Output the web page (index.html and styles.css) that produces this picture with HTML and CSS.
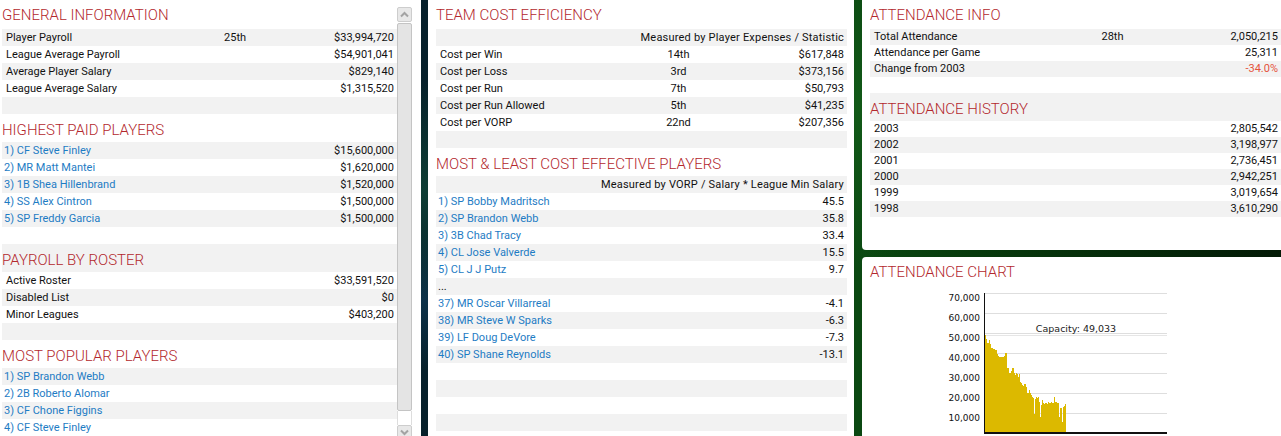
FILE: index.html
```html
<!DOCTYPE html>
<html lang="en">
<head>
<meta charset="utf-8">
<title>Team Finances</title>
<link rel="stylesheet" href="styles.css">
</head>
<body>
<div class="screen">
  <section class="panel panel-left">
    <div class="list list-left">
      <div class="title first">GENERAL INFORMATION</div>
      <div class="row"><span class="c-name">Player Payroll</span><span class="c-rank">25th</span><span class="c-val">$33,994,720</span></div>
      <div class="row"><span class="c-name">League Average Payroll</span><span class="c-rank"></span><span class="c-val">$54,901,041</span></div>
      <div class="row"><span class="c-name">Average Player Salary</span><span class="c-rank"></span><span class="c-val">$829,140</span></div>
      <div class="row"><span class="c-name">League Average Salary</span><span class="c-rank"></span><span class="c-val">$1,315,520</span></div>
      <div class="row empty"></div>
      <div class="title">HIGHEST PAID PLAYERS</div>
      <div class="row link"><span class="c-name">1) CF Steve Finley</span><span class="c-rank"></span><span class="c-val">$15,600,000</span></div>
      <div class="row link"><span class="c-name">2) MR Matt Mantei</span><span class="c-rank"></span><span class="c-val">$1,620,000</span></div>
      <div class="row link"><span class="c-name">3) 1B Shea Hillenbrand</span><span class="c-rank"></span><span class="c-val">$1,520,000</span></div>
      <div class="row link"><span class="c-name">4) SS Alex Cintron</span><span class="c-rank"></span><span class="c-val">$1,500,000</span></div>
      <div class="row link"><span class="c-name">5) SP Freddy Garcia</span><span class="c-rank"></span><span class="c-val">$1,500,000</span></div>
      <div class="row empty"></div>
      <div class="title">PAYROLL BY ROSTER</div>
      <div class="row"><span class="c-name">Active Roster</span><span class="c-rank"></span><span class="c-val">$33,591,520</span></div>
      <div class="row"><span class="c-name">Disabled List</span><span class="c-rank"></span><span class="c-val">$0</span></div>
      <div class="row"><span class="c-name">Minor Leagues</span><span class="c-rank"></span><span class="c-val">$403,200</span></div>
      <div class="row empty"></div>
      <div class="title">MOST POPULAR PLAYERS</div>
      <div class="row link"><span class="c-name">1) SP Brandon Webb</span><span class="c-rank"></span><span class="c-val"></span></div>
      <div class="row link"><span class="c-name">2) 2B Roberto Alomar</span><span class="c-rank"></span><span class="c-val"></span></div>
      <div class="row link"><span class="c-name">3) CF Chone Figgins</span><span class="c-rank"></span><span class="c-val"></span></div>
      <div class="row link"><span class="c-name">4) CF Steve Finley</span><span class="c-rank"></span><span class="c-val"></span></div>
    </div>
    <div class="scrollbar">
      <div class="sb-btn"><svg width="13" height="13" viewBox="0 0 13 13"><path d="M3 8.5 L6.5 5 L10 8.5" fill="none" stroke="#a3a3a3" stroke-width="2"/></svg></div>
      <div class="sb-thumb"></div>
      <div class="sb-track"></div>
      <div class="sb-btn"><svg width="13" height="13" viewBox="0 0 13 13"><path d="M3 4.5 L6.5 8 L10 4.5" fill="none" stroke="#a3a3a3" stroke-width="2"/></svg></div>
    </div>
  </section>

  <section class="panel panel-mid">
    <div class="list">
      <div class="title first">TEAM COST EFFICIENCY</div>
      <div class="row note"><span class="c-val">Measured by Player Expenses / Statistic</span></div>
      <div class="row"><span class="c-name">Cost per Win</span><span class="c-rank">14th</span><span class="c-val">$617,848</span></div>
      <div class="row"><span class="c-name">Cost per Loss</span><span class="c-rank">3rd</span><span class="c-val">$373,156</span></div>
      <div class="row"><span class="c-name">Cost per Run</span><span class="c-rank">7th</span><span class="c-val">$50,793</span></div>
      <div class="row"><span class="c-name">Cost per Run Allowed</span><span class="c-rank">5th</span><span class="c-val">$41,235</span></div>
      <div class="row"><span class="c-name">Cost per VORP</span><span class="c-rank">22nd</span><span class="c-val">$207,356</span></div>
      <div class="row empty"></div>
      <div class="title">MOST &amp; LEAST COST EFFECTIVE PLAYERS</div>
      <div class="row note"><span class="c-val">Measured by VORP / Salary * League Min Salary</span></div>
      <div class="row link"><span class="c-name">1) SP Bobby Madritsch</span><span class="c-rank"></span><span class="c-val">45.5</span></div>
      <div class="row link"><span class="c-name">2) SP Brandon Webb</span><span class="c-rank"></span><span class="c-val">35.8</span></div>
      <div class="row link"><span class="c-name">3) 3B Chad Tracy</span><span class="c-rank"></span><span class="c-val">33.4</span></div>
      <div class="row link"><span class="c-name">4) CL Jose Valverde</span><span class="c-rank"></span><span class="c-val">15.5</span></div>
      <div class="row link"><span class="c-name">5) CL J J Putz</span><span class="c-rank"></span><span class="c-val">9.7</span></div>
      <div class="row plain-left"><span class="c-name">...</span><span class="c-rank"></span><span class="c-val"></span></div>
      <div class="row link"><span class="c-name">37) MR Oscar Villarreal</span><span class="c-rank"></span><span class="c-val">-4.1</span></div>
      <div class="row link"><span class="c-name">38) MR Steve W Sparks</span><span class="c-rank"></span><span class="c-val">-6.3</span></div>
      <div class="row link"><span class="c-name">39) LF Doug DeVore</span><span class="c-rank"></span><span class="c-val">-7.3</span></div>
      <div class="row link"><span class="c-name">40) SP Shane Reynolds</span><span class="c-rank"></span><span class="c-val">-13.1</span></div>
      <div class="row empty"></div>
      <div class="row empty"></div>
      <div class="row empty"></div>
      <div class="row empty"></div>
      <div class="row empty"></div>
    </div>
  </section>

  <div class="right-col">
    <section class="panel panel-right panel-att">
      <div class="list">
        <div class="title first">ATTENDANCE INFO</div>
        <div class="row"><span class="c-name">Total Attendance</span><span class="c-rank">28th</span><span class="c-val">2,050,215</span></div>
        <div class="row"><span class="c-name">Attendance per Game</span><span class="c-rank"></span><span class="c-val">25,311</span></div>
        <div class="row"><span class="c-name">Change from 2003</span><span class="c-rank"></span><span class="c-val neg">-34.0%</span></div>
        <div class="row empty"></div>
        <div class="title">ATTENDANCE HISTORY</div>
        <div class="row"><span class="c-name">2003</span><span class="c-rank"></span><span class="c-val">2,805,542</span></div>
        <div class="row"><span class="c-name">2002</span><span class="c-rank"></span><span class="c-val">3,198,977</span></div>
        <div class="row"><span class="c-name">2001</span><span class="c-rank"></span><span class="c-val">2,736,451</span></div>
        <div class="row"><span class="c-name">2000</span><span class="c-rank"></span><span class="c-val">2,942,251</span></div>
        <div class="row"><span class="c-name">1999</span><span class="c-rank"></span><span class="c-val">3,019,654</span></div>
        <div class="row"><span class="c-name">1998</span><span class="c-rank"></span><span class="c-val">3,610,290</span></div>
      </div>
    </section>
    <section class="panel panel-right panel-chart">
      <div class="title first">ATTENDANCE CHART</div>
      <div class="chart">
        <svg width="250" height="150" viewBox="0 0 250 150">
          <g stroke="#dedede" stroke-width="1">
            <line x1="55" x2="237" y1="7.5" y2="7.5"/>
            <line x1="55" x2="237" y1="27.5" y2="27.5"/>
            <line x1="55" x2="237" y1="47.5" y2="47.5"/>
            <line x1="55" x2="237" y1="67.5" y2="67.5"/>
            <line x1="55" x2="237" y1="87.5" y2="87.5"/>
            <line x1="55" x2="237" y1="107.5" y2="107.5"/>
            <line x1="55" x2="237" y1="127.5" y2="127.5"/>
            <line x1="55" x2="237" y1="49.5" y2="49.5" stroke="#e6e6e6"/>
          </g>
          <path fill="#dcb900" d="M55 146V49H56V53H57V57H59V54H60V58H61V62H63V63H65V64H67V68H68V70H69V71H74V70H75V67H77V82H79V87H81V85H82V82H84V87H85V89H86V87H87V88H88V91H89V88H90V96H91V97H92V99H93V100H94V98H96V101H97V107H99V104H100V107H101V109H102V111H103V112H104V128H105V113H106V111H107V112H108V111H109V116H110V131H111V119H112V114H113V117H114V118H115V117H117V118H118V116H119V117H120V117H121V116H122V117H124V111H125V116H127V117H129V131H130V122H132V136H133V121H134V120H135V118H136V146Z"/>
          <line x1="54.5" x2="54.5" y1="7" y2="148" stroke="#111" stroke-width="1"/>
          <line x1="54" x2="237" y1="147" y2="147" stroke="#111" stroke-width="2"/>
          <g class="axis-labels" text-anchor="end">
            <text x="50" y="14.5">70,000</text>
            <text x="50" y="34.5">60,000</text>
            <text x="50" y="54.5">50,000</text>
            <text x="50" y="74.5">40,000</text>
            <text x="50" y="94.5">30,000</text>
            <text x="50" y="114.5">20,000</text>
            <text x="50" y="134.5">10,000</text>
          </g>
          <text class="cap-label" x="146" y="45.5" text-anchor="middle">Capacity: 49,033</text>
        </svg>
      </div>
    </section>
  </div>
</div>
</body>
</html>
```

FILE: styles.css
```css
* { box-sizing: border-box; }
html, body { margin: 0; padding: 0; }
body {
  width: 1281px;
  height: 436px;
  overflow: hidden;
  background:
    radial-gradient(ellipse 40px 110px at 424px 190px, rgba(20, 85, 60, 0.55), transparent),
    radial-gradient(ellipse 40px 70px at 424px 300px, rgba(20, 70, 110, 0.45), transparent),
    radial-gradient(ellipse 90px 160px at 858px 110px, rgba(25, 110, 30, 0.45), transparent),
    linear-gradient(90deg, #04121c 0%, #06202a 33%, #0a3226 52%, #0b4812 67%, #073a0c 76%, #031a06 100%);
  font-family: Roboto, "Liberation Sans", sans-serif;
  font-size: 11px;
  color: #111;
}
.screen { display: flex; height: 436px; }
.panel { background: #fff; flex: none; overflow: hidden; }
.panel-left {
  width: 421px;
  height: 436px;
  margin-right: 7px;
  padding-left: 2px;
  display: flex;
}
.panel-mid {
  width: 426px;
  height: 436px;
  margin-right: 8px;
  padding: 0 7px 0 8px;
}
.right-col {
  width: 426px;
  flex: none;
  display: flex;
  flex-direction: column;
  gap: 7px;
}
.panel-right { padding: 0 7px 0 8px; }
.panel-att { height: 250px; border-bottom-left-radius: 4px; }
.panel-chart { flex: 1; border-top-left-radius: 4px; }

.list { width: 411px; }
.list-left { width: 395px; flex: none; overflow: hidden; }
.list > :nth-child(even) { background: #f2f2f2; }

.title {
  height: 28px;
  padding-top: 6px;
  line-height: 21px;
  font-size: 15px;
  font-weight: 300;
  color: #b3282d;
  white-space: nowrap;
}
.title.first { height: 29px; padding-top: 5px; }

.row {
  display: grid;
  grid-template-columns: 50% 18% 32%;
  height: 17px;
  line-height: 17px;
  white-space: nowrap;
}
.panel-right .row { height: 16px; line-height: 15px; }
.c-name { padding-left: 4px; }
.c-rank { text-align: center; }
.c-val { text-align: right; padding-right: 3px; }
.link .c-name { padding-left: 2px; color: #1e7cc4; }
.plain-left .c-name { padding-left: 2px; }
.note .c-val { grid-column: 1 / -1; letter-spacing: 0.2px; }
.neg { color: #e5533c; }

.scrollbar {
  width: 16px;
  flex: none;
  padding-top: 7px;
  display: flex;
  flex-direction: column;
}
.sb-btn {
  width: 15px;
  height: 15px;
  flex: none;
  background: #e8e8e8;
  border: 1px solid #cdcdcd;
  border-radius: 2px;
}
.sb-btn svg { display: block; }
.sb-thumb {
  width: 15px;
  height: 388px;
  margin-top: 1px;
  flex: none;
  background: #e4e4e4;
  border: 1px solid #c4c4c4;
  border-radius: 2px;
}
.sb-track {
  width: 15px;
  height: 14px;
  flex: none;
  border-left: 1px solid #dddddd;
  border-right: 1px solid #dddddd;
}

.chart { margin-left: 60px; }
.chart svg { display: block; }
.axis-labels text {
  font-family: "DejaVu Sans", sans-serif;
  font-size: 9px;
  fill: #111;
}
.cap-label {
  font-family: "DejaVu Sans", sans-serif;
  font-size: 9.5px;
  fill: #222;
}
```
